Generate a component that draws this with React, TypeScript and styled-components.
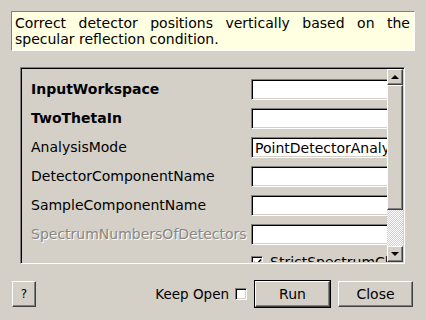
import styled, { createGlobalStyle } from 'styled-components';

const GlobalStyle = createGlobalStyle`
  html, body {
    margin: 0;
    padding: 0;
    background: #d4d0c8;
  }
  body {
    font-family: 'DejaVu Sans', 'Liberation Sans', sans-serif;
    font-size: 14px;
    color: #000;
  }
`;

const params: ParamType[] = [
  { name: 'InputWorkspace', bold: true },
  { name: 'TwoThetaIn', bold: true },
  { name: 'AnalysisMode', value: 'PointDetectorAnalysis' },
  { name: 'DetectorComponentName' },
  { name: 'SampleComponentName' },
  { name: 'SpectrumNumbersOfDetectors', disabled: true },
];

const App = () => {
  return (
    <Dialog>
      <GlobalStyle />
      <Description>
        Correct detector positions vertically based on the specular reflection
        condition.
      </Description>

      <Panel>
        <ScrollView>
          {params.map((p) => (
            <Row key={p.name}>
              <Label $bold={p.bold} $disabled={p.disabled}>
                {p.name}
              </Label>
              <Field readOnly value={p.value ?? ''} />
            </Row>
          ))}
          <Row>
            <span />
            <CheckLine>
              <CheckBox>
                <CheckMark />
              </CheckBox>
              StrictSpectrumChecking
            </CheckLine>
          </Row>
        </ScrollView>
        <ScrollBar>
          <ArrowButton>
            <ArrowUp />
          </ArrowButton>
          <Thumb />
          <Track />
          <ArrowButton>
            <ArrowDown />
          </ArrowButton>
        </ScrollBar>
      </Panel>

      <Footer>
        <Button $small>?</Button>
        <Spacer />
        <KeepOpen>
          Keep Open
          <CheckBox />
        </KeepOpen>
        <DefaultFrame>
          <Button>Run</Button>
        </DefaultFrame>
        <Button>Close</Button>
      </Footer>
    </Dialog>
  );
};

const CheckMark = () => (
  <svg width="9" height="9" viewBox="0 0 9 9">
    <path d="M1 4 L3.5 6.5 L8 1.5" stroke="#000" strokeWidth="1.6" fill="none" />
  </svg>
);

type ParamType = {
  name: string;
  bold?: boolean;
  disabled?: boolean;
  value?: string;
};

const Dialog = styled.div`
  width: 426px;
  height: 320px;
  box-sizing: border-box;
  padding: 11px 0 0 0;
  display: flex;
  flex-direction: column;
  overflow: hidden;
`;

const Description = styled.p`
  margin: 0 0 0 11px;
  width: 404px;
  height: 40px;
  box-sizing: border-box;
  padding: 3px 4px 3px 3px;
  line-height: 16px;
  text-align: justify;
  background: #ffffe1;
  border: 1px solid;
  border-color: #808080 #ffffff #ffffff #808080;
`;

const Panel = styled.div`
  margin: 16px 0 0 20px;
  width: 385px;
  height: 197px;
  box-sizing: border-box;
  display: flex;
  border: 1px solid;
  border-color: #808080 #ffffff #ffffff #808080;
  box-shadow: inset 1px 1px #000, inset -1px -1px #d4d0c8;
  padding: 1px;
`;

const ScrollView = styled.div`
  flex: 1;
  overflow: hidden;
  padding: 10px 0 0 9px;
  display: flex;
  flex-direction: column;
  gap: 8px;
`;

const Row = styled.div`
  display: grid;
  grid-template-columns: 220px 150px;
  align-items: center;
  height: 21px;
  flex-shrink: 0;
`;

const Label = styled.span<{ $bold?: boolean; $disabled?: boolean }>`
  white-space: nowrap;
  font-weight: ${(p) => (p.$bold ? 'bold' : 'normal')};
  color: ${(p) => (p.$disabled ? '#8a8782' : '#000')};
  text-shadow: ${(p) => (p.$disabled ? '1px 1px #ffffff' : 'none')};
  line-height: 21px;
`;

const Field = styled.input`
  width: 150px;
  height: 21px;
  box-sizing: border-box;
  margin: 0;
  padding: 0 0 0 3px;
  font: inherit;
  color: #000;
  background: #fff;
  border: 1px solid;
  border-color: #808080 #ffffff #ffffff #808080;
  box-shadow: inset 1px 1px #000, inset -1px -1px #d4d0c8;
  outline: none;
`;

const CheckLine = styled.span`
  display: flex;
  align-items: center;
  gap: 7px;
  white-space: nowrap;
  margin-top: -3px;
`;

const CheckBox = styled.span`
  width: 12px;
  height: 12px;
  box-sizing: border-box;
  flex-shrink: 0;
  display: inline-flex;
  align-items: center;
  justify-content: center;
  background: #fff;
  border: 1px solid;
  border-color: #808080 #ffffff #ffffff #808080;
  box-shadow: inset 1px 1px #000, inset -1px -1px #d4d0c8;
`;

const ScrollBar = styled.div`
  width: 16px;
  display: flex;
  flex-direction: column;
`;

const Raised = styled.div`
  box-sizing: border-box;
  background: #d4d0c8;
  border: 1px solid;
  border-color: #ffffff #404040 #404040 #ffffff;
  box-shadow: inset -1px -1px #808080;
`;

const ArrowButton = styled(Raised)`
  height: 16px;
  display: flex;
  align-items: center;
  justify-content: center;
`;

const ArrowUp = styled.span`
  width: 0;
  height: 0;
  border-left: 4px solid transparent;
  border-right: 4px solid transparent;
  border-bottom: 4px solid #000;
  margin-top: -1px;
`;

const ArrowDown = styled(ArrowUp)`
  border-bottom: none;
  border-top: 4px solid #000;
  margin-top: 0;
`;

const Thumb = styled(Raised)`
  height: 125px;
`;

const Track = styled.div`
  flex: 1;
  background: repeating-conic-gradient(#ffffff 0 25%, #d4d0c8 0 50%) 0 0 / 2px 2px;
`;

const Footer = styled.div`
  margin-top: 16px;
  padding: 0 13px 0 12px;
  display: flex;
  align-items: center;
  font-size: 13.5px;
`;

const Spacer = styled.div`
  flex: 1;
`;

const KeepOpen = styled.label`
  display: flex;
  align-items: center;
  gap: 6px;
  margin-right: 7px;
`;

const DefaultFrame = styled.div`
  border: 1px solid #000;
  display: flex;
  margin-right: 7px;
`;

const Button = styled.button<{ $small?: boolean }>`
  width: ${(p) => (p.$small ? '24px' : '75px')};
  height: 26px;
  box-sizing: border-box;
  margin: 0;
  padding: 0;
  font-family: inherit;
  font-size: ${(p) => (p.$small ? '12px' : '14px')};
  color: #000;
  background: #d4d0c8;
  border: 1px solid;
  border-color: #ffffff #404040 #404040 #ffffff;
  box-shadow: inset -1px -1px #808080;
`;

export default App;
